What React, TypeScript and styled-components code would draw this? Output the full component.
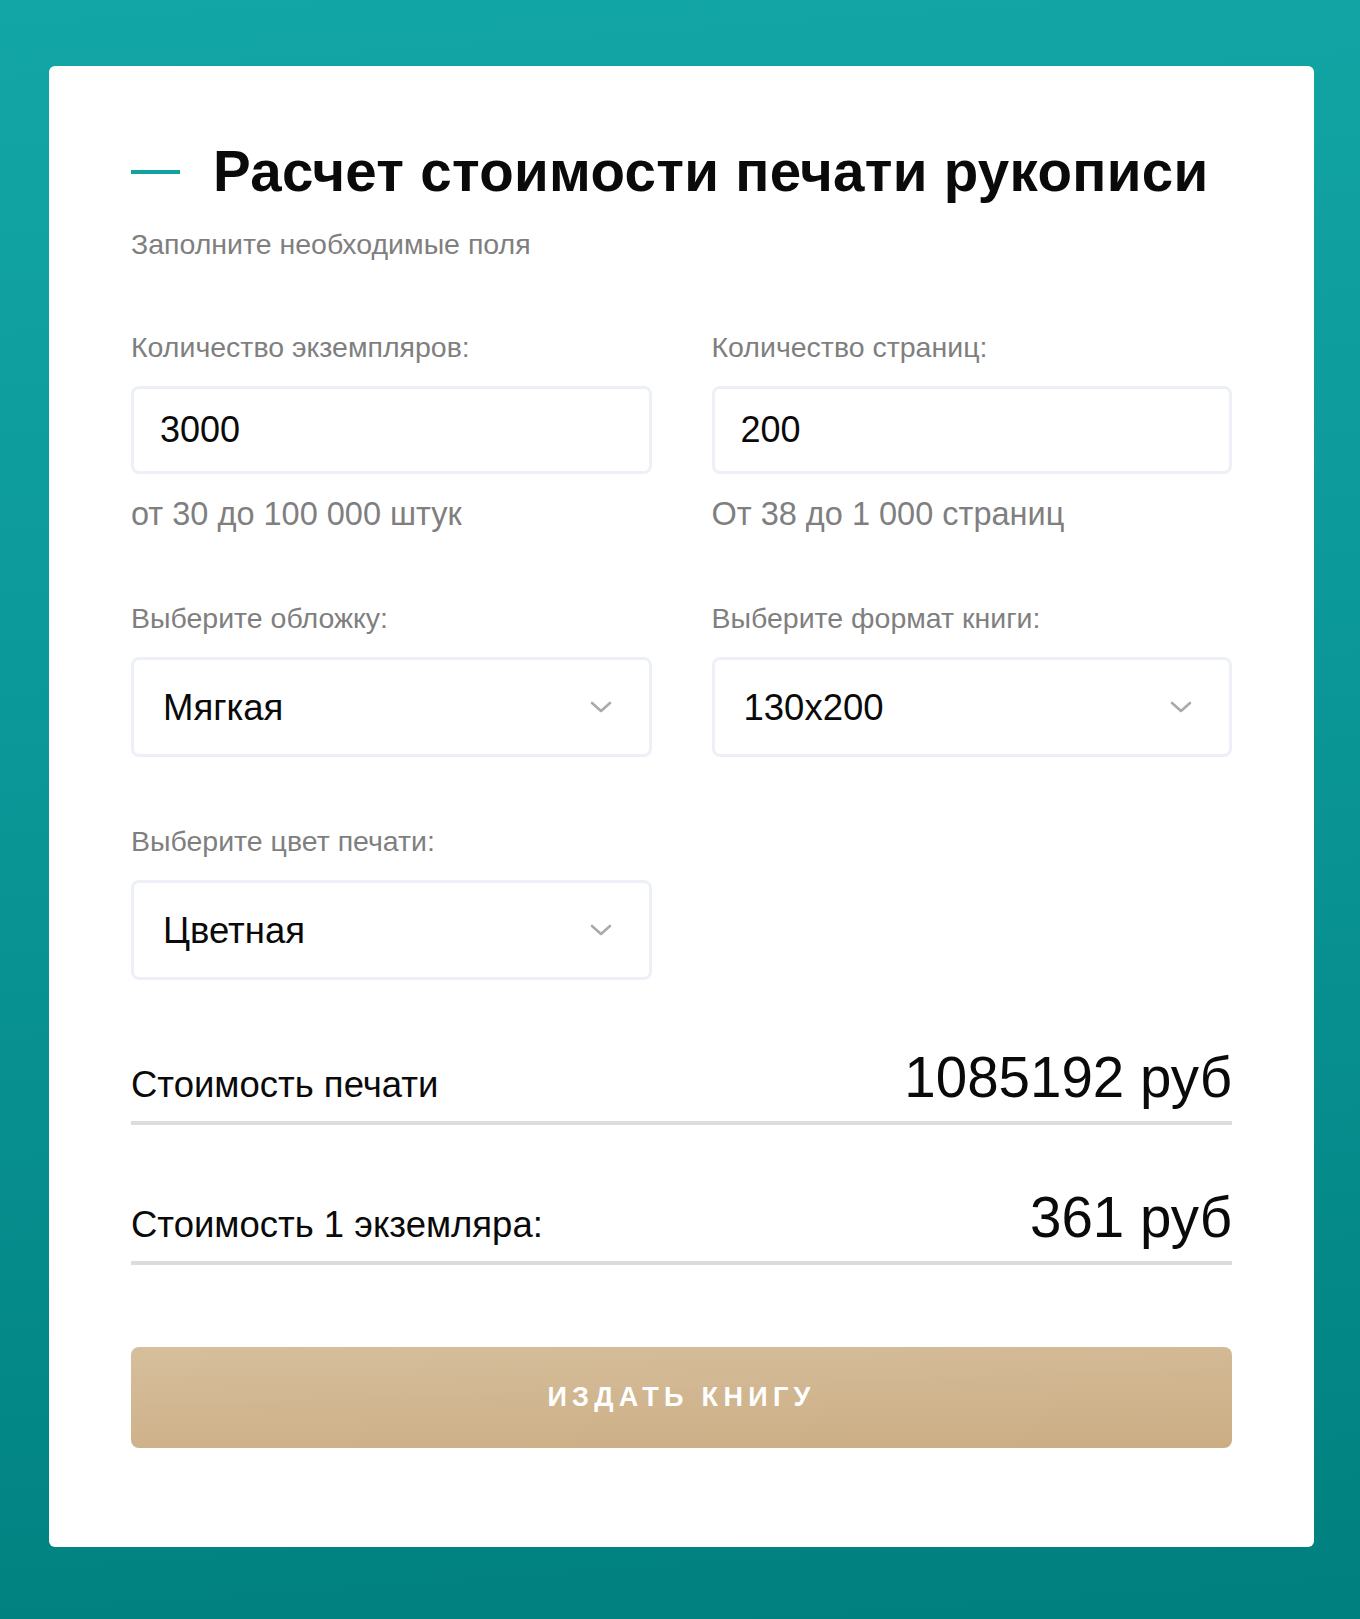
import React from 'react';
import styled, { createGlobalStyle } from 'styled-components';

const Colors = {
    teal: '#13a39f',
    text: '#0a0a0a',
    gray: '#7f7f7f',
    inputBorder: '#edf1f7',
    divider: '#dcdcdc',
    chevron: '#aaaaaa',
};

const GlobalStyle = createGlobalStyle`
    * {
        box-sizing: border-box;
    }
    html, body {
        margin: 0;
        padding: 0;
    }
    body {
        font-family: 'Liberation Sans', Arial, sans-serif;
        background: linear-gradient(176deg, #13a6a6 0%, #0b9797 45%, #00807f 100%);
        min-height: 1619px;
    }
`;

const Page = styled.div`
    padding: 66px 46px 73px 49px;
`;

const Card = styled.div`
    background-color: #fff;
    border-radius: 6px;
    padding: 79px 82px 99px;
`;

const Heading = styled.div`
    display: flex;
    align-items: center;
    gap: 33px;
`;

const Dash = styled.span`
    width: 49px;
    height: 4px;
    background-color: ${Colors.teal};
    flex-shrink: 0;
`;

const Title = styled.h1`
    margin: 0;
    font-size: 56.5px;
    line-height: 54px;
    letter-spacing: 0.3px;
    font-weight: bold;
    color: ${Colors.text};
`;

const Subtitle = styled.div`
    margin-top: 31px;
    font-size: 28.5px;
    line-height: 28px;
    color: ${Colors.gray};
`;

const FieldsGrid = styled.div`
    margin-top: 77px;
    display: grid;
    grid-template-columns: 1fr 1fr;
    column-gap: 60px;
    row-gap: 72px;
`;

const Field = styled.div`
    display: flex;
    flex-direction: column;
`;

const Label = styled.label`
    font-size: 28.5px;
    line-height: 25px;
    color: ${Colors.gray};
    margin-bottom: 26px;
`;

const TextInput = styled.input`
    width: 100%;
    height: 88px;
    border: 3px solid ${Colors.inputBorder};
    border-radius: 8px;
    padding: 0 26px;
    font-family: inherit;
    font-size: 36px;
    color: ${Colors.text};
    background: #fff;
    outline: none;
`;

const Hint = styled.div`
    margin-top: 20px;
    font-size: 32.5px;
    line-height: 40px;
    color: ${Colors.gray};
`;

const SelectWrap = styled.div`
    position: relative;
`;

const Select = styled.select`
    width: 100%;
    height: 100px;
    border: 3px solid ${Colors.inputBorder};
    border-radius: 8px;
    padding: 0 70px 0 29px;
    font-family: inherit;
    font-size: 36.5px;
    color: ${Colors.text};
    background: #fff;
    appearance: none;
    -webkit-appearance: none;
    outline: none;
`;

const Chevron = styled.svg`
    position: absolute;
    right: 40px;
    top: 50%;
    width: 22px;
    height: 12px;
    margin-top: -6px;
    pointer-events: none;
`;

const CostRow = styled.div<{ first?: boolean }>`
    margin-top: ${({ first }) => (first ? 70 : 65)}px;
    display: flex;
    justify-content: space-between;
    align-items: baseline;
    padding-bottom: 15px;
    border-bottom: 4px solid ${Colors.divider};
`;

const CostLabel = styled.div`
    font-size: 36.5px;
    color: ${Colors.text};
`;

const CostValue = styled.div`
    font-size: 56.5px;
    line-height: 56px;
    color: ${Colors.text};
`;

const PublishButton = styled.button`
    margin-top: 82px;
    width: 100%;
    height: 101px;
    border: none;
    border-radius: 8px;
    background: linear-gradient(178deg, #d6bf9c 0%, #cbad84 100%);
    color: #fff;
    font-family: inherit;
    font-size: 27px;
    font-weight: bold;
    letter-spacing: 5.3px;
    text-transform: uppercase;
    cursor: pointer;
`;

const ChevronIcon = () => (
    <Chevron viewBox='0 0 22 12' fill='none'>
        <path
            d='M2 2l9 8 9-8'
            stroke={Colors.chevron}
            strokeWidth='2.6'
            strokeLinecap='round'
            strokeLinejoin='round'
        />
    </Chevron>
);

const SelectField = ({
    label,
    value,
    options,
}: { label: string; value: string; options: string[] }) => (
    <Field>
        <Label>{label}</Label>
        <SelectWrap>
            <Select defaultValue={value}>
                {options.map((o) => (
                    <option key={o} value={o}>
                        {o}
                    </option>
                ))}
            </Select>
            <ChevronIcon />
        </SelectWrap>
    </Field>
);

export default function App() {
    return (
        <>
            <GlobalStyle />
            <Page>
                <Card>
                    <Heading>
                        <Dash />
                        <Title>Расчет стоимости печати рукописи</Title>
                    </Heading>
                    <Subtitle>Заполните необходимые поля</Subtitle>

                    <FieldsGrid>
                        <Field>
                            <Label>Количество экземпляров:</Label>
                            <TextInput defaultValue='3000' />
                            <Hint>от 30 до 100 000 штук</Hint>
                        </Field>
                        <Field>
                            <Label>Количество страниц:</Label>
                            <TextInput defaultValue='200' />
                            <Hint>От 38 до 1 000 страниц</Hint>
                        </Field>
                        <SelectField
                            label='Выберите обложку:'
                            value='Мягкая'
                            options={['Мягкая', 'Твердая']}
                        />
                        <SelectField
                            label='Выберите формат книги:'
                            value='130x200'
                            options={['130x200', '145x215', '170x240']}
                        />
                        <SelectField
                            label='Выберите цвет печати:'
                            value='Цветная'
                            options={['Цветная', 'Черно-белая']}
                        />
                    </FieldsGrid>

                    <CostRow first>
                        <CostLabel>Стоимость печати</CostLabel>
                        <CostValue>1085192 руб</CostValue>
                    </CostRow>
                    <CostRow>
                        <CostLabel>Стоимость 1 экземляра:</CostLabel>
                        <CostValue>361 руб</CostValue>
                    </CostRow>

                    <PublishButton>Издать книгу</PublishButton>
                </Card>
            </Page>
        </>
    );
}
